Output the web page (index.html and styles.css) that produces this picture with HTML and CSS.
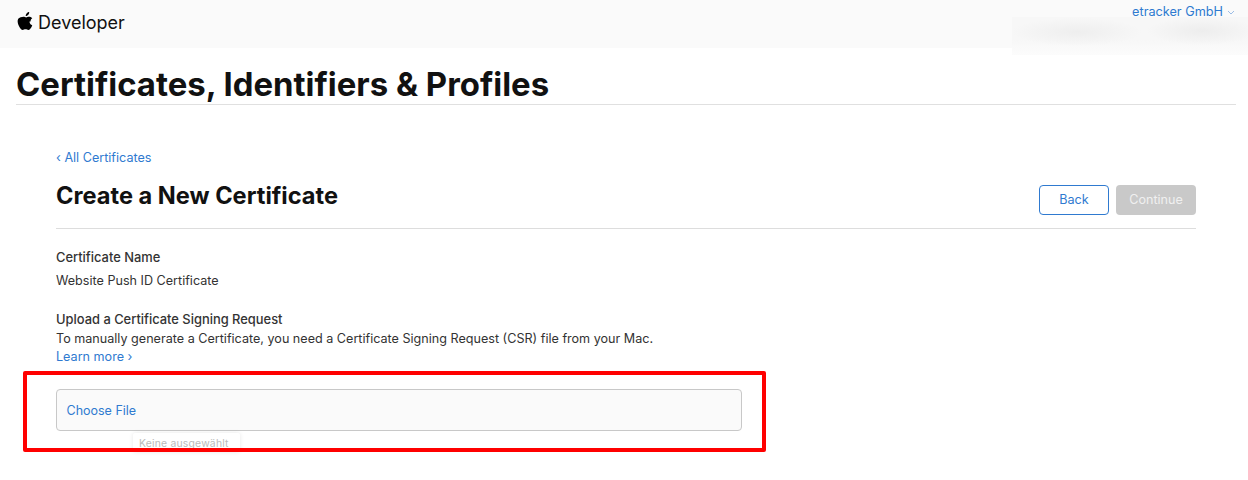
FILE: index.html
```html
<!DOCTYPE html>
<html lang="en">
<head>
  <meta charset="UTF-8">
  <title>Certificates, Identifiers &amp; Profiles</title>
  <link rel="stylesheet" href="styles.css">
</head>
<body>
  <!-- Top bar -->
  <header class="topbar">
    <div class="brand">
      <svg class="apple" viewBox="1.500 1.400 14.400 17.600" width="16" height="18">
        <path d="M14.100 10.600c0-2 1.600-3 1.700-3-1-1.400-2.400-1.600-2.900-1.600-1.300-.1-2.400.7-3.100.7-.6 0-1.600-.7-2.700-.7C5.700 6 2.900 6.800 2.100 8c-1.500 2.600.1 6.500 1.600 8.700.7 1.100 1.600 2.200 2.700 2.200 1.100 0 1.500-.7 2.800-.7 1.300 0 1.700.7 2.800.7 1.200 0 1.900-1.100 2.600-2.100.8-1.200 1.200-2.400 1.200-2.500-.1 0-2.700-1-2.700-3.700zM11.900 4.200c.6-.7 1-1.700.9-2.700-.9 0-1.900.6-2.500 1.300-.5.6-1 1.600-.9 2.600 1 .1 1.900-.5 2.500-1.200z"/>
      </svg>
      <span class="brand-name">Developer</span>
    </div>
    <div class="account">
      <span>etracker GmbH</span>
      <svg class="chevron" viewBox="0 0 8 5" width="8" height="5"><path d="M1 1l3 3 3-3" fill="none" stroke="#9bbde6" stroke-width="1"/></svg>
    </div>
    <div class="blurred"></div>
  </header>

  <h1 class="page-title">Certificates, Identifiers &amp; Profiles</h1>

  <main class="content">
    <a class="back-link" href="#">&lsaquo; All Certificates</a>
    <div class="title-row">
      <h2>Create a New Certificate</h2>
      <div class="actions">
        <button class="btn btn-outline">Back</button>
        <button class="btn btn-disabled">Continue</button>
      </div>
    </div>

    <section class="field">
      <h3>Certificate Name</h3>
      <p>Website Push ID Certificate</p>
    </section>

    <section class="upload">
      <h3>Upload a Certificate Signing Request</h3>
      <p>To manually generate a Certificate, you need a Certificate Signing Request (CSR) file from your Mac.</p>
      <a href="#">Learn more &rsaquo;</a>
      <div class="file-box">
        <a href="#">Choose File</a>
        <span class="file-tip">Keine ausgewählt</span>
      </div>
    </section>
  </main>

  <!-- Red annotation frame -->
  <div class="annotation"></div>
</body>
</html>
```

FILE: styles.css
```css
body {
  margin: 0;
  font-family: Inter, "Liberation Sans", sans-serif;
  font-size: 12.6px;
  color: #333;
  background: #fff;
  position: relative;
  height: 480px;
  overflow: hidden;
}
a {
  color: #2f7ad0;
  text-decoration: none;
}
h1, h2, h3, p {
  margin: 0;
}

.topbar {
  height: 48px;
  background: #fafafa;
  padding: 0 16px;
  display: flex;
  justify-content: space-between;
  align-items: flex-start;
  position: relative;
}
.brand {
  display: flex;
  align-items: center;
  gap: 5px;
  padding-top: 11px;
  color: #111;
}
.apple {
  display: block;
  margin-left: 1px;
  margin-top: -5px;
}
.brand-name {
  font-size: 18px;
  line-height: 24px;
}
.account {
  position: relative;
  z-index: 1;
  margin-right: -3px;
  padding-top: 5px;
  color: #2f7ad0;
  font-size: 12.7px;
  line-height: 14px;
  display: flex;
  align-items: center;
  gap: 4px;
}
.blurred {
  position: absolute;
  left: 1012px;
  top: 17px;
  width: 236px;
  height: 38px;
  background:
    radial-gradient(ellipse 65px 14px at 65px 15px, #eeeeee, transparent),
    radial-gradient(ellipse 55px 14px at 190px 14px, #ededed, transparent),
    linear-gradient(#f7f7f7, #f7f7f7 60%, #fcfcfc);
}

.page-title {
  margin: 16px 12px 0 16px;
  height: 40px;
  line-height: 40px;
  border-bottom: 1px solid #e0e0e0;
  font-size: 32.9px;
  font-weight: 700;
  color: #111;
}

.content {
  margin: 45px 52px 0 56px;
}
.back-link {
  display: block;
  line-height: 16px;
}
.title-row {
  display: flex;
  justify-content: space-between;
  align-items: center;
  height: 54px;
  margin-top: 2px;
  padding-bottom: 6px;
  border-bottom: 1px solid #ddd;
}
.title-row h2 {
  font-size: 23.6px;
  font-weight: 700;
  color: #111;
}
.actions {
  display: flex;
  gap: 7px;
  padding-top: 9px;
}
.btn {
  height: 30px;
  border-radius: 4px;
  font-family: inherit;
  font-size: 12.6px;
  padding: 0;
}
.btn-outline {
  width: 70px;
  background: #fff;
  border: 1px solid #2f7ad0;
  color: #2f7ad0;
}
.btn-disabled {
  width: 80px;
  background: #c9c9c9;
  border: none;
  color: #f0f0f0;
}

.field {
  margin-top: 21px;
}
.field h3, .upload h3 {
  font-size: 12.9px;
  font-weight: 500;
  line-height: 16px;
}
.field p {
  margin-top: 7px;
  line-height: 16px;
}
.upload {
  margin-top: 22px;
  line-height: 18px;
}
.upload h3 {
  line-height: 18px;
  margin-bottom: 1px;
}
.file-box {
  position: relative;
  width: 674px;
  height: 38px;
  margin-top: 23px;
  padding: 2px 0 0 10px;
  background: #fafafa;
  border: 1px solid #c8c8c8;
  border-radius: 4px;
  display: flex;
  align-items: center;
}
.file-box a {
  margin-left: -0.5px;
  font-size: 12.5px;
}
.file-tip {
  position: absolute;
  left: 76px;
  top: 43px;
  padding: 0 11px 0 6px;
  height: 19px;
  line-height: 21px;
  font-size: 10.4px;
  letter-spacing: 0.2px;
  color: #bbb;
  background: #fff;
  border-radius: 2px;
  box-shadow: 0 0 4px rgba(0, 0, 0, 0.1);
}

.annotation {
  position: absolute;
  left: 23px;
  top: 371px;
  width: 735px;
  height: 73px;
  border: 4px solid #f00;
  border-radius: 2px;
}
```
